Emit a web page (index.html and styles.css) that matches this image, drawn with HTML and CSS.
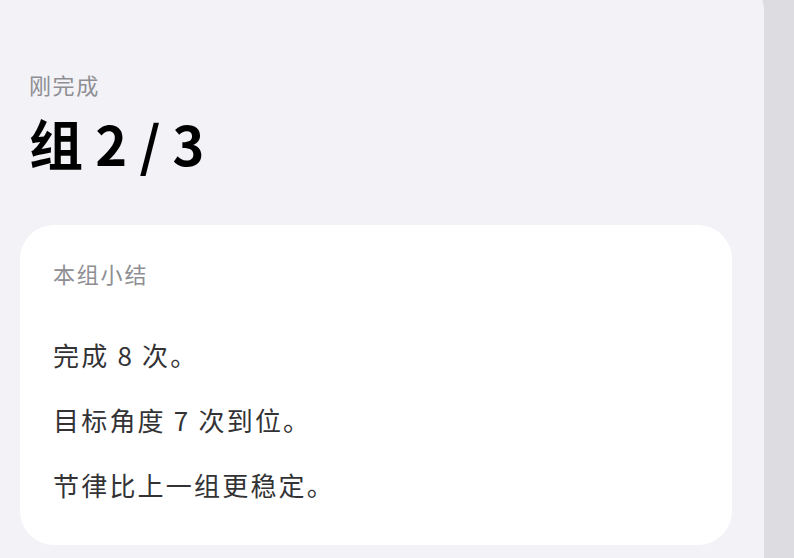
FILE: index.html
```html
<!DOCTYPE html>
<html lang="zh-CN">
<head>
    <meta charset="UTF-8">
    <meta name="viewport" content="width=device-width, initial-scale=1.0">
    <title>组 2 / 3</title>
    <link rel="stylesheet" href="styles.css">
</head>
<body>
    <div class="sheet">
        <header class="set-head">
            <p class="set-label">刚完成</p>
            <h1 class="set-title">组 2 / 3</h1>
        </header>
        <section class="summary">
            <h2 class="summary-title">本组小结</h2>
            <p>完成 8 次。</p>
            <p>目标角度 7 次到位。</p>
            <p>节律比上一组更稳定。</p>
        </section>
    </div>
</body>
</html>
```

FILE: styles.css
```css
body {
    font-family: "Noto Sans CJK SC", "Noto Sans", sans-serif;
    background: linear-gradient(to right, #d4d4d9 0, #d9d9dd 6px, #d9d9dd 20px, #dddde1 100%);
    margin: 0;
    padding: 0;
    overflow: hidden;
}
.sheet {
    width: 764px;
    min-height: 600px;
    margin-top: -20px;
    padding: 89px 32px 0 20px;
    box-sizing: border-box;
    background: #f2f2f7;
    border-top-right-radius: 30px;
}
.set-head {
    padding-left: 9px;
}
.set-label {
    margin: 0;
    font-size: 22px;
    line-height: 30px;
    letter-spacing: 1.6px;
    color: #8e8e93;
}
.set-title {
    margin: 12px 0 0;
    font-size: 54px;
    line-height: 64px;
    font-weight: 700;
    color: #000;
}
.summary {
    margin-top: 50px;
    background: #fff;
    border-radius: 34px;
    padding: 33px 33px 40px;
}
.summary-title {
    margin: 0 0 47px;
    font-size: 22px;
    line-height: 30px;
    letter-spacing: 1.8px;
    font-weight: 400;
    color: #8e8e93;
}
.summary p {
    margin: 0 0 25px;
    font-size: 26px;
    line-height: 40px;
    letter-spacing: 2.2px;
    color: #333336;
}
.summary p:last-child {
    margin-bottom: 0;
}
```
